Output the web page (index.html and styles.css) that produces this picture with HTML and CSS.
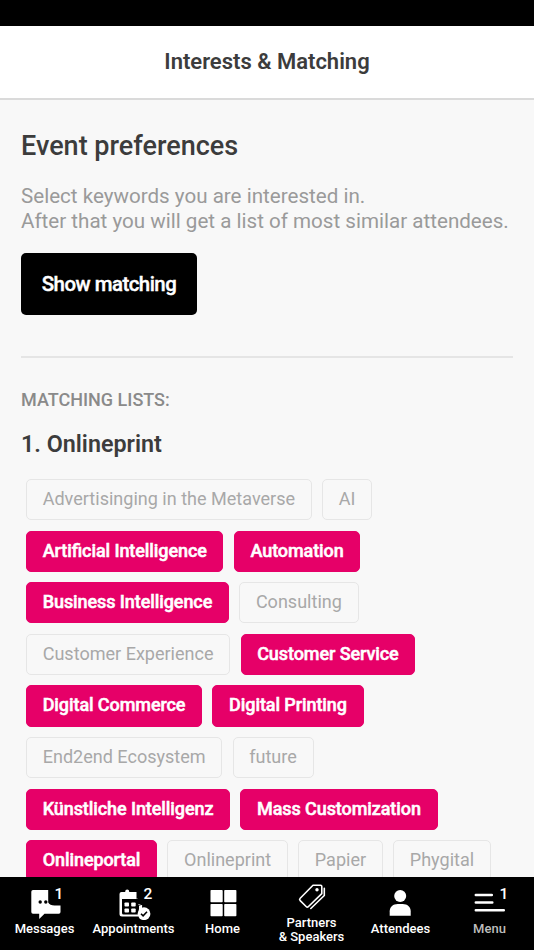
FILE: index.html
```html
<!DOCTYPE html>
<html lang="en">
<head>
    <meta charset="UTF-8">
    <meta name="viewport" content="width=device-width, initial-scale=1.0">
    <title>Interests &amp; Matching</title>
    <link rel="stylesheet" href="styles.css">
</head>
<body>
    <div class="status-bar"></div>

    <header class="header">
        <h1>Interests &amp; Matching</h1>
    </header>

    <main class="content">
        <h2>Event preferences</h2>
        <p class="intro">Select keywords you are interested in.<br>After that you will get a list of most similar attendees.</p>
        <button type="button" class="btn-matching">Show matching</button>

        <div class="divider"></div>

        <div class="section-label">MATCHING LISTS:</div>
        <h3>1. Onlineprint</h3>

        <div class="tags">
            <span class="tag">Advertisinging in the Metaverse</span>
            <span class="tag">AI</span>
            <span class="tag selected">Artificial Intelligence</span>
            <span class="tag selected">Automation</span>
            <span class="tag selected">Business Intelligence</span>
            <span class="tag">Consulting</span>
            <span class="tag">Customer Experience</span>
            <span class="tag selected">Customer Service</span>
            <span class="tag selected">Digital Commerce</span>
            <span class="tag selected">Digital Printing</span>
            <span class="tag">End2end Ecosystem</span>
            <span class="tag">future</span>
            <span class="tag selected">Künstliche Intelligenz</span>
            <span class="tag selected">Mass Customization</span>
            <span class="tag selected">Onlineportal</span>
            <span class="tag">Onlineprint</span>
            <span class="tag">Papier</span>
            <span class="tag">Phygital</span>
        </div>
    </main>

    <nav class="bottom-nav">
        <a class="nav-item">
            <span class="nav-icon">
                <svg width="40" height="34" viewBox="0 0 40 34">
                    <path fill="#fff" d="M8 4h15.200v12.500c1 2 3.300 2.900 6.300 2.900h6v6.600a1.700 1.700 0 0 1-1.700 1.700H19.500L14.200 33v-5.300H8A1.700 1.700 0 0 1 6.300 26V5.700A1.700 1.700 0 0 1 8 4z"/>
                    <circle cx="15.200" cy="16" r="1.700"/>
                    <circle cx="20.800" cy="16" r="1.700"/>
                </svg>
                <span class="badge">1</span>
            </span>
            <span class="nav-label">Messages</span>
        </a>
        <a class="nav-item">
            <span class="nav-icon">
                <svg width="40" height="34" viewBox="0 0 40 34">
                    <path fill="#fff" d="M7.500 6h3.700V5.500a2 2 0 0 1 4 0V6H22.500v6.800H28V24H24v6.500H8a2.500 2.500 0 0 1-2.500-2.500V8a2 2 0 0 1 2-2z"/>
                    <path d="M8 13h17v15.500H9.500A1.500 1.500 0 0 1 8 27z"/>
                    <g fill="#fff">
                        <rect x="10.500" y="16.500" width="4.500" height="4" rx=".8"/>
                        <rect x="17.200" y="16.500" width="4.500" height="4" rx=".8"/>
                        <rect x="10.500" y="22.500" width="4.500" height="4" rx=".8"/>
                        <rect x="17.200" y="22.500" width="4.500" height="4" rx=".8"/>
                    </g>
                    <path d="M24 12h6v8h-6z"/>
                    <path d="M24.500 18.600l3.700 1.200" stroke="#fff" stroke-width="1"/>
                    <circle cx="30" cy="27.700" r="6.400" fill="#fff"/>
                    <path d="M27 27.700l2.100 2.100 3.900-4" fill="none" stroke="#000" stroke-width="1.600"/>
                </svg>
                <span class="badge">2</span>
            </span>
            <span class="nav-label">Appointments</span>
        </a>
        <a class="nav-item">
            <span class="nav-icon">
                <svg width="40" height="34" viewBox="0 0 40 34">
                    <g fill="#fff">
                        <rect x="7.500" y="4" width="12.200" height="12.300" rx=".8"/>
                        <rect x="21.200" y="4" width="12.200" height="12.300" rx=".8"/>
                        <rect x="7.500" y="17.900" width="12.200" height="12.300" rx=".8"/>
                        <rect x="21.200" y="17.900" width="12.200" height="12.300" rx=".8"/>
                    </g>
                </svg>
            </span>
            <span class="nav-label">Home</span>
        </a>
        <a class="nav-item two-lines">
            <span class="nav-icon">
                <svg width="40" height="34" viewBox="0 0 40 34">
                    <g fill="none" stroke="#fff" stroke-width="1.600" stroke-linejoin="round" stroke-linecap="round">
                        <path d="M21 5.200h7.600a1.200 1.200 0 0 1 1.200 1.200v7.300L16.500 26.500a1.700 1.700 0 0 1-2.400 0L8.200 20.600a1.700 1.700 0 0 1 0-2.400z"/>
                        <path d="M32.300 8.200v7.300L18.800 28.500"/>
                    </g>
                    <circle cx="25" cy="9.800" r="1.700" fill="#fff"/>
                </svg>
            </span>
            <span class="nav-label">Partners<br>&amp; Speakers</span>
        </a>
        <a class="nav-item">
            <span class="nav-icon">
                <svg width="40" height="34" viewBox="0 0 40 34">
                    <circle cx="19.200" cy="10" r="6" fill="#fff"/>
                    <path fill="#fff" d="M8.700 29.800v-4.500c0-4.500 3.500-7.300 8-7.300h5c4.500 0 8 2.800 8 7.300v4.500z"/>
                </svg>
            </span>
            <span class="nav-label">Attendees</span>
        </a>
        <a class="nav-item menu">
            <span class="nav-icon">
                <svg width="40" height="34" viewBox="0 0 40 34">
                    <path d="M5.800 9h16M5.800 16.600h16.500M5.800 24.200h28" stroke="#fff" stroke-width="2.500" stroke-linecap="round"/>
                </svg>
                <span class="badge">1</span>
            </span>
            <span class="nav-label">Menu</span>
        </a>
    </nav>
</body>
</html>
```

FILE: styles.css
```css
* {
    margin: 0;
    padding: 0;
    box-sizing: border-box;
    font-family: Roboto, 'Liberation Sans', sans-serif;
}

body {
    height: 100vh;
    display: flex;
    flex-direction: column;
    overflow: hidden;
    background-color: #f8f8f8;
}

.status-bar {
    height: 26px;
    flex-shrink: 0;
    background-color: #000;
}

.header {
    height: 74px;
    flex-shrink: 0;
    display: flex;
    justify-content: center;
    align-items: center;
    padding-bottom: 2px;
    background-color: #fff;
    border-bottom: 2px solid #dadada;
}

h1 {
    font-size: 22px;
    font-weight: 600;
    color: #3c3c3c;
}

.content {
    flex: 1;
    min-height: 0;
    overflow: hidden;
    padding: 30px 21px 0;
}

h2 {
    font-size: 27px;
    line-height: 32px;
    font-weight: 500;
    color: #3c3c3c;
}

.intro {
    margin-top: 22px;
    font-size: 20.600px;
    line-height: 24.500px;
    color: #9a9a9a;
    white-space: nowrap;
}

.btn-matching {
    display: block;
    width: 176px;
    height: 62px;
    margin-top: 20px;
    border: none;
    border-radius: 5px;
    background-color: #000;
    color: #fff;
    font-size: 20.400px;
    font-weight: 500;
    letter-spacing: -0.5px;
    -webkit-text-stroke: 0.4px #fff;
    cursor: pointer;
}

.divider {
    height: 2px;
    margin-top: 41px;
    background-color: #e5e5e5;
}

.section-label {
    margin-top: 31px;
    font-size: 18px;
    line-height: 22px;
    font-weight: 500;
    color: #8a8a8a;
}

h3 {
    margin-top: 19px;
    font-size: 23.300px;
    line-height: 28px;
    font-weight: 600;
    color: #3c3c3c;
}

.tags {
    display: flex;
    flex-wrap: wrap;
    gap: 10.300px;
    margin-top: 21px;
    padding: 0 5px;
}

.tag {
    height: 41.300px;
    padding: 0 15.700px;
    border: 1.300px solid #e6e6e6;
    border-radius: 5px;
    font-size: 18.050px;
    line-height: 38px;
    color: #a8a8a8;
    white-space: nowrap;
}

.tag.selected {
    border-color: #e60068;
    background-color: #e60068;
    color: #fff;
    font-weight: 500;
    letter-spacing: -0.1px;
    font-feature-settings: 'liga' 1;
    -webkit-text-stroke: 0.5px #fff;
}

.bottom-nav {
    height: 73px;
    flex-shrink: 0;
    display: flex;
    background-color: #000;
}

.nav-item {
    width: 89px;
    padding-top: 9px;
    display: flex;
    flex-direction: column;
    align-items: center;
    color: #fff;
}

.nav-icon {
    position: relative;
    width: 40px;
    height: 34px;
}

.nav-icon svg {
    display: block;
}

.badge {
    position: absolute;
    top: 0;
    left: 30px;
    font-size: 15.500px;
    line-height: 16px;
    font-weight: 500;
}

.nav-label {
    margin-top: 2px;
    font-size: 13px;
    line-height: 14px;
    font-weight: 500;
    text-align: center;
    white-space: nowrap;
}

.two-lines {
    padding-top: 3px;
}

.menu .nav-label {
    color: #bdbdbd;
}
```
